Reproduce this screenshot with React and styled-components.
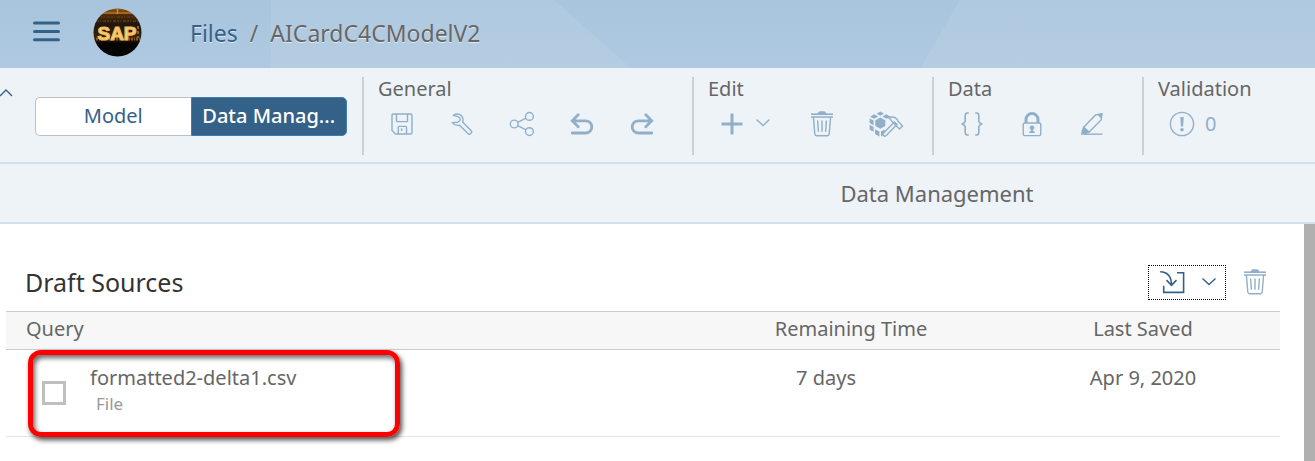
import React, { useState } from "react";
import styled, { createGlobalStyle } from "styled-components";

const Colors = {
  shell: "#a9c5de",
  panel: "#eef3f8",
  line: "#d1e0ee",
  divider: "#c8d1d8",
  primary: "#346187",
  icon: "#91afc9",
  text: "#666666",
  heading: "#333333",
  muted: "#999999",
  tableLine: "#cccccc",
  highlight: "#ff0000",
};

const GlobalStyle = createGlobalStyle`
  * {
    box-sizing: border-box;
  }

  body {
    margin: 0;
    background: #ffffff;
    color: ${Colors.text};
    font-family: "Noto Sans", "Open Sans", sans-serif;
    font-size: 20px;
    line-height: 24px;
  }

  button {
    font: inherit;
    color: inherit;
    border: none;
    background: none;
    padding: 0;
    cursor: pointer;
  }

  svg {
    display: block;
    flex: none;
  }
`;

// ===============================
// Shell
// ===============================
const Page = styled.div`
  min-height: 100vh;
  display: flex;
  flex-direction: column;
`;

const ShellBar = styled.header`
  display: flex;
  position: relative;
  isolation: isolate;
  align-items: center;
  height: 68px;
  padding: 0 32px 3px;
  background: linear-gradient(${Colors.shell}, #aec9e0);

  &::before,
  &::after {
    content: "";
    position: absolute;
    inset: 0;
    z-index: -1;
    background: rgba(255, 255, 255, 0.08);
  }

  &::before {
    clip-path: polygon(271px 0, 554px 0, 631px 100%, 271px 100%);
  }

  &::after {
    clip-path: polygon(73% 0, 100% 0, 100% 100%, 70% 100%);
  }
`;

const MenuButton = styled.button`
  color: ${Colors.primary};
  margin-right: 32px;
`;

const Breadcrumb = styled.nav`
  display: flex;
  gap: 12px;
  margin-left: 48px;
  font-size: 23px;
  line-height: 32px;
  text-shadow: 0 1px 0 rgba(255, 255, 255, 0.6);

  a {
    color: ${Colors.primary};
    text-decoration: none;
  }
`;

// ===============================
// Toolbar
// ===============================
const Toolbar = styled.div`
  display: flex;
  align-items: flex-start;
  height: 96px;
  padding-top: 9px;
  background: ${Colors.panel};
  border-bottom: 2px solid ${Colors.line};
`;

const CollapseButton = styled.button`
  width: 35px;
  padding-top: 11px;
  color: ${Colors.primary};
`;

const Segmented = styled.div`
  display: flex;
  width: 312px;
  height: 39px;
  margin: 20px 15px 0 0;
`;

const Segment = styled.button`
  flex: 1;
  min-width: 0;
  padding: 0 8px 2px;
  font-weight: ${(props) => (props.$active ? "500" : "400")};
  overflow: hidden;
  white-space: nowrap;
  color: ${(props) => (props.$active ? "#ffffff" : Colors.primary)};
  background: ${(props) => (props.$active ? Colors.primary : "#ffffff")};
  border: 1px solid ${(props) => (props.$active ? "#427cac" : "#bfbfbf")};

  &:first-child {
    border-right: none;
    border-radius: 5px 0 0 5px;
  }

  &:last-child {
    border-radius: 0 5px 5px 0;
  }
`;

const Group = styled.section`
  height: 78px;
  padding: 0 20px 0 8px;
  border-left: 2px solid ${Colors.divider};
`;

const GroupTitle = styled.h2`
  margin: 0 0 5px 6px;
  font-size: 20px;
  line-height: 24px;
  font-weight: 400;
`;

const GroupItems = styled.div`
  display: flex;
`;

const IconButton = styled.button`
  display: flex;
  align-items: center;
  gap: 10px;
  width: ${(props) => (props.$wide ? "90px" : "60px")};
  height: 36px;
  padding-left: 17px;
  color: ${Colors.icon};
`;

const TitleBar = styled.div`
  display: flex;
  justify-content: center;
  padding: 13px 0 13px 559px;
  background: ${Colors.panel};
  border-bottom: 2px solid ${Colors.line};

  h1 {
    margin: 0;
    font-size: 22px;
    line-height: 32px;
    font-weight: 400;
  }
`;

// ===============================
// Draft sources
// ===============================
const Content = styled.main`
  flex: 1;
  padding: 41px 24px 0 6px;
  border-right: 11px solid #b0b0b0;
`;

const SectionHeader = styled.div`
  display: flex;
  align-items: center;
  justify-content: space-between;
  height: 35px;
  margin-bottom: 11px;
  padding: 0 12px 0 19px;

  h2 {
    margin: 0;
    padding-bottom: 2px;
    font-size: 25px;
    line-height: 32px;
    font-weight: 400;
    color: ${Colors.heading};
  }
`;

const SectionActions = styled.div`
  display: flex;
  gap: 16px;
`;

const ImportButton = styled.button`
  display: flex;
  align-items: center;
  gap: 16px;
  width: 78px;
  height: 35px;
  padding-left: 10px;
  color: ${Colors.primary};
  border: 1px dotted #000000;
`;

const DeleteButton = styled.button`
  padding-bottom: 2px;
  color: ${Colors.icon};
`;

const Table = styled.table`
  width: 100%;
  table-layout: fixed;
  border-collapse: collapse;

  th {
    height: 38px;
    padding: 0 0 4px;
    font-weight: 400;
    background: #f7f7f7;
    border: solid ${Colors.tableLine};
    border-width: 1px 0;
  }

  td {
    height: 87px;
    padding: 16px 0 0;
    vertical-align: top;
    border-bottom: 1px solid #e5e5e5;
  }
`;

const QueryHead = styled.th`
  text-align: left;

  && {
    padding-left: 20px;
  }
`;

const RemainingCell = styled.td`
  text-align: center;

  && {
    padding-right: 50px;
  }
`;

const SavedCell = styled.td`
  text-align: center;
`;

const Source = styled.div`
  display: flex;
  position: relative;
  padding-left: 36px;
  gap: 24px;
`;

const Checkbox = styled.input`
  appearance: none;
  width: 24px;
  height: 24px;
  margin: 15px 0 0;
  background: #ffffff;
  border: 3px solid #bfbfbf;

  &:checked {
    background: ${Colors.primary};
  }
`;

const SourceLabel = styled.label`
  span {
    display: block;
    padding-left: 6px;
    font-size: 17px;
    line-height: 28px;
    color: ${Colors.muted};
  }
`;

const Highlight = styled.div`
  position: absolute;
  top: -16px;
  left: 22px;
  width: 372px;
  height: 87px;
  border: 5px solid ${Colors.highlight};
  border-radius: 13px;
  box-shadow: 2px 3px 5px rgba(0, 0, 0, 0.7), inset 2px 3px 5px rgba(0, 0, 0, 0.6);
  pointer-events: none;
`;

// ===============================
// Icons
// ===============================
const Icon = ({ width = 26, height = 26, stroke = 1.4, children }) => (
  <svg
    width={width}
    height={height}
    viewBox={`0 0 ${width} ${height}`}
    fill="none"
    stroke="currentColor"
    strokeWidth={stroke}
    aria-hidden="true"
  >
    {children}
  </svg>
);

const MenuIcon = () => (
  <Icon width={29} height={24} stroke={3}>
    <path d="M2.5 2h24M2.5 10.4h24M2.5 18.8h24" strokeLinecap="round" />
  </Icon>
);

const LogoIcon = () => (
  <svg width="49" height="49" viewBox="0 0 49 49" role="img" aria-label="SAP">
    <defs>
      <clipPath id="logo-clip">
        <circle cx="24.5" cy="24.5" r="24" />
      </clipPath>
      <linearGradient id="logo-bg" x1="0" y1="0" x2="0" y2="1">
        <stop offset="0" stopColor="#9a5c12" />
        <stop offset="0.14" stopColor="#4a2b0b" />
        <stop offset="0.34" stopColor="#21150d" />
        <stop offset="0.6" stopColor="#39220c" />
        <stop offset="0.72" stopColor="#080604" />
        <stop offset="1" stopColor="#020202" />
      </linearGradient>
    </defs>
    <g clipPath="url(#logo-clip)">
      <rect width="49" height="49" fill="url(#logo-bg)" />
      <path d="M6 5h36" stroke="#bd7420" strokeWidth="1.4" />
      <path d="M24.5 0v6" stroke="#d58a2a" strokeWidth="1.4" />
      <path d="M8 9h34M4 13h41" stroke="#54340f" strokeWidth="2" strokeDasharray="2 1 1 2 3 1" />
      <path d="M1 31h47" stroke="#8a5416" strokeWidth="3" strokeDasharray="1 1 2 1" />
      <path d="M45 18v12" stroke="#57713f" strokeWidth="2" strokeDasharray="3 2" />
      <text
        x="24"
        y="32"
        textAnchor="middle"
        fontFamily="Liberation Sans, sans-serif"
        fontWeight="700"
        fontSize="19"
        fill="#f6d57e"
        stroke="#f0b95a"
        strokeWidth="1.2"
      >
        SAP
      </text>
    </g>
  </svg>
);

const ChevronUpIcon = () => (
  <Icon width={14} height={10}>
    <path d="M0 8 6 2l6 6" />
  </Icon>
);

const ChevronDownIcon = () => (
  <Icon width={16} height={14}>
    <path d="m1.5 2.5 6.5 6 6.5-6" />
  </Icon>
);

const SaveIcon = () => (
  <Icon>
    <path d="M3 4.2q0-1.2 1.2-1.2h17.6q1.2 0 1.2 1.2v17.6q0 1.2-1.2 1.2H6.5L3 19.5z" />
    <path d="M7.5 3v6.8q0 .8.8.8h9.4q.8 0 .8-.8V3M9.3 23v-6.8q0-.8.8-.8h6.6q.8 0 .8.8V23M12.6 17.5v2.5" />
  </Icon>
);

const WrenchIcon = () => (
  <Icon>
    <path
      d="M4.3 4.3C8 1.7 13.2 3.1 14 8q.2 1.8-.3 3.3l8.8 8.6q.8.8 0 1.6l-1.4 1.4q-.8.8-1.6 0l-9-8.7Q6 15.2 3.3 11.6l5.4-.3L11 9.5V7.2L9 5.7z"
      strokeLinejoin="round"
    />
  </Icon>
);

const ShareIcon = () => (
  <Icon>
    <circle cx="5.2" cy="13" r="3.9" />
    <circle cx="20.4" cy="5.4" r="3.9" />
    <circle cx="20.4" cy="20.6" r="3.9" />
    <path d="M8.7 11.3 17 7.2M8.7 14.7l8.3 4.1" />
  </Icon>
);

const UndoIcon = () => (
  <Icon stroke={2.8}>
    <path d="M9.2 3.7 3.3 9.8l5.9 6M4 9.8h12.7a6 6 0 0 1 0 12.2H3.2" strokeLinecap="round" />
  </Icon>
);

const RedoIcon = () => (
  <Icon stroke={2.8}>
    <path d="m16.8 3.7 5.9 6.1-5.9 6M22 9.8H9.3a6 6 0 0 0 0 12.2h13.5" strokeLinecap="round" />
  </Icon>
);

const PlusIcon = () => (
  <Icon stroke={3}>
    <path d="M13 2.5v21M2.5 13h21" />
  </Icon>
);

const TrashIcon = () => (
  <Icon>
    <path d="M2 3.2h22" strokeWidth="1.6" />
    <path d="M9.5 2.4q.4-1.4 1.6-1.4h3.8q1.2 0 1.6 1.4z" fill="currentColor" />
    <path d="M2 6h22M4.4 6l1.4 17q.2 1.7 1.8 1.7h10.8q1.6 0 1.8-1.7L21.6 6" />
    <path d="m8.6 9.5.8 11.3M13 9.5v11.3M17.4 9.5l-.8 11.3" />
  </Icon>
);

const BuildIcon = () => (
  <Icon width={36}>
    <g fill="currentColor" stroke="none">
      <path d="m7.6 2.7 3.7-2.2L15 2.7l-3.7 2.1zM1 5.8l4.3-2.5 3.9 2.1-4.1 2.4zM13.4 5.4l3.9-2.1 4.3 2.5-4.1 2zM.6 7.4l4 2.2v4.7l-4-2.2zM.6 13.8l4 2.3v4.7l-4-2.3zM6 18.2l4.4 2.4v4.8L6 22.9z" />
      <path d="m11.3 6.5 5 2.8V15l-5 2.8-5-2.8V9.3zM12 20.6l3.6-2v4.8L12 25.4z" />
    </g>
    <path
      d="m14.4 22.2 11-11.2 2.6 2.6-10.8 11q-1.3 1.2-2.7-.1-1.3-1.2-.1-2.3zM19.6 6.8q4.6-2.2 8.6 1.4l1 2.4 4.3 4.3-3 3-4.3-4.2-3.1-3.2q-1.2-2-3.5-3.7z"
      strokeLinejoin="round"
      fill={Colors.panel}
    />
  </Icon>
);

const BracesIcon = () => (
  <Icon stroke={1.6}>
    <path d="M9.8 2H8.6Q6.2 2 6.2 4.4v5.2Q6.2 12.4 2.6 13q3.6.6 3.6 3.4v5.2Q6.2 24 8.6 24h1.2M16.2 2h1.2q2.4 0 2.4 2.4v5.2q0 2.8 3.6 3.4-3.6.6-3.6 3.4v5.2q0 2.4-2.4 2.4h-1.2" />
  </Icon>
);

const LockIcon = () => (
  <Icon>
    <path d="M7 12V8.5a6 6 0 0 1 12 0V12" strokeWidth="3" />
    <rect x="4.2" y="12" width="17.6" height="12.6" rx="1.5" />
    <path
      d="M13 14.4a2.3 2.3 0 0 1 1.2 4.3v1.6h1.4V22h-5.2v-1.7h1.4v-1.6A2.3 2.3 0 0 1 13 14.4z"
      fill="currentColor"
      stroke="none"
    />
  </Icon>
);

const PenIcon = () => (
  <Icon>
    <path d="m4.6 16.3 12-12.4L23 2.8l-.9 6.1-12.3 12.4z" />
    <path d="m4.6 15.2 6.2 5.9-3.2 1.9L2 24l.8-5zM17.8 3.2l5.5-.8-.8 5.4z" fill="currentColor" stroke="none" />
    <path d="M5 23.2h18.5" />
  </Icon>
);

const AlertIcon = () => (
  <Icon>
    <circle cx="13" cy="13" r="11.6" />
    <path d="M11.3 6h3.4l-.6 9.5h-2.2z" fill="currentColor" stroke="none" />
    <circle cx="13" cy="18.8" r="1.8" fill="currentColor" stroke="none" />
  </Icon>
);

const ImportIcon = () => (
  <Icon stroke={1.6}>
    <path d="M1.2 1.8c7.2.2 11.2 5 11.3 13.2M7.5 10.1l5 5.2 5-5.2M18 2.8h6.6v19.6H4.7v-6.6" />
  </Icon>
);

// ===============================
// MAIN COMPONENT
// ===============================
const generalActions = [
  { label: "Save", icon: <SaveIcon /> },
  { label: "Settings", icon: <WrenchIcon /> },
  { label: "Share", icon: <ShareIcon /> },
  { label: "Undo", icon: <UndoIcon /> },
  { label: "Redo", icon: <RedoIcon /> },
];

const dataActions = [
  { label: "Formula", icon: <BracesIcon /> },
  { label: "Lock", icon: <LockIcon /> },
  { label: "Edit data", icon: <PenIcon /> },
];

const sources = [
  { id: "source-1", name: "formatted2-delta1.csv", type: "File", remaining: "7 days", saved: "Apr 9, 2020" },
];

const App = () => {
  const [tab, setTab] = useState("data");

  return (
    <Page>
      <GlobalStyle />
      <ShellBar>
        <MenuButton aria-label="Menu">
          <MenuIcon />
        </MenuButton>
        <LogoIcon />
        <Breadcrumb>
          <a href="#files">Files</a>
          <span>/</span>
          <span>AICardC4CModelV2</span>
        </Breadcrumb>
      </ShellBar>

      <Toolbar>
        <CollapseButton aria-label="Collapse toolbar">
          <ChevronUpIcon />
        </CollapseButton>
        <Segmented>
          <Segment $active={tab === "model"} onClick={() => setTab("model")}>
            Model
          </Segment>
          <Segment $active={tab === "data"} onClick={() => setTab("data")}>
            Data Manag...
          </Segment>
        </Segmented>

        <Group>
          <GroupTitle>General</GroupTitle>
          <GroupItems>
            {generalActions.map((action) => (
              <IconButton key={action.label} aria-label={action.label}>
                {action.icon}
              </IconButton>
            ))}
          </GroupItems>
        </Group>

        <Group>
          <GroupTitle>Edit</GroupTitle>
          <GroupItems>
            <IconButton $wide aria-label="Add">
              <PlusIcon />
              <ChevronDownIcon />
            </IconButton>
            <IconButton aria-label="Delete">
              <TrashIcon />
            </IconButton>
            <IconButton aria-label="Build">
              <BuildIcon />
            </IconButton>
          </GroupItems>
        </Group>

        <Group>
          <GroupTitle>Data</GroupTitle>
          <GroupItems>
            {dataActions.map((action) => (
              <IconButton key={action.label} aria-label={action.label}>
                {action.icon}
              </IconButton>
            ))}
          </GroupItems>
        </Group>

        <Group>
          <GroupTitle>Validation</GroupTitle>
          <GroupItems>
            <IconButton $wide aria-label="Validation issues">
              <AlertIcon />
              <span>0</span>
            </IconButton>
          </GroupItems>
        </Group>
      </Toolbar>

      <TitleBar>
        <h1>Data Management</h1>
      </TitleBar>

      <Content>
        <SectionHeader>
          <h2>Draft Sources</h2>
          <SectionActions>
            <ImportButton aria-label="Import data">
              <ImportIcon />
              <ChevronDownIcon />
            </ImportButton>
            <DeleteButton aria-label="Delete source">
              <TrashIcon />
            </DeleteButton>
          </SectionActions>
        </SectionHeader>

        <Table>
          <colgroup>
            <col />
            <col width="310" />
            <col width="274" />
          </colgroup>
          <thead>
            <tr>
              <QueryHead>Query</QueryHead>
              <th>Remaining Time</th>
              <th>Last Saved</th>
            </tr>
          </thead>
          <tbody>
            {sources.map((source) => (
              <tr key={source.id}>
                <td>
                  <Source>
                    <Checkbox type="checkbox" id={source.id} />
                    <SourceLabel htmlFor={source.id}>
                      {source.name}
                      <span>{source.type}</span>
                    </SourceLabel>
                    <Highlight />
                  </Source>
                </td>
                <RemainingCell>{source.remaining}</RemainingCell>
                <SavedCell>{source.saved}</SavedCell>
              </tr>
            ))}
          </tbody>
        </Table>
      </Content>
    </Page>
  );
};

export default App;
